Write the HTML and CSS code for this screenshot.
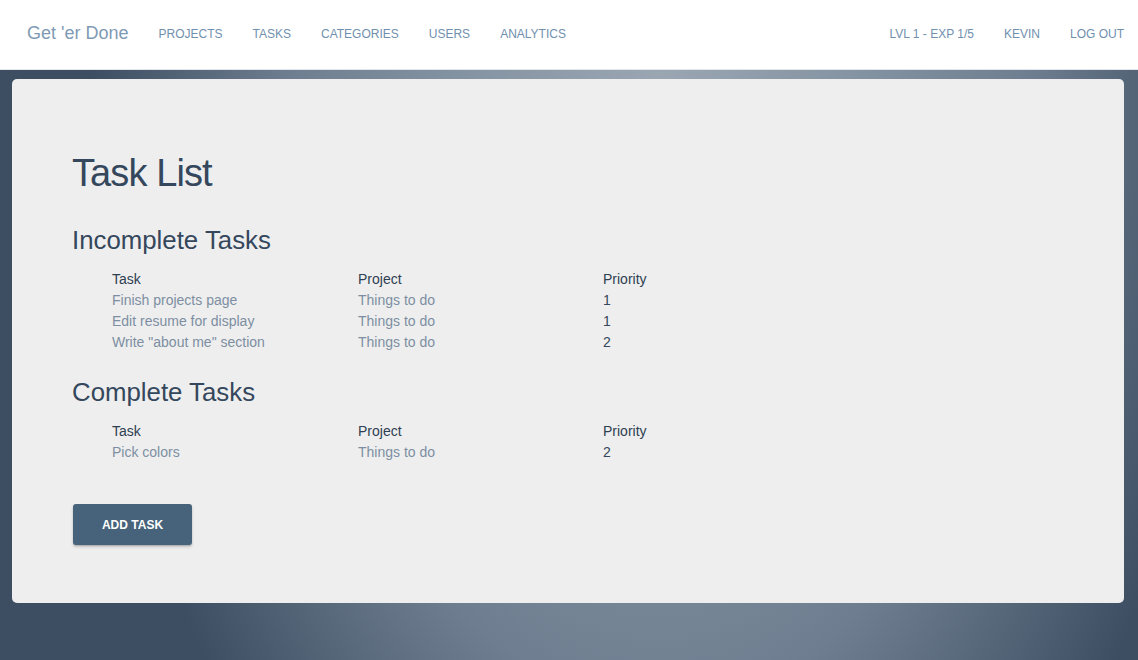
FILE: index.html
```html
<!DOCTYPE html>
<html lang="en">
<head>
<meta charset="utf-8">
<title>Get 'er Done - Task List</title>
<link rel="stylesheet" href="styles.css">
</head>
<body>
<nav class="navbar">
  <div class="nav-left">
    <a class="brand" href="#">Get 'er Done</a>
    <a class="nav-link" href="#">PROJECTS</a>
    <a class="nav-link" href="#">TASKS</a>
    <a class="nav-link" href="#">CATEGORIES</a>
    <a class="nav-link" href="#">USERS</a>
    <a class="nav-link" href="#">ANALYTICS</a>
  </div>
  <div class="nav-right">
    <a class="nav-link" href="#">LVL 1 - EXP 1/5</a>
    <a class="nav-link" href="#">KEVIN</a>
    <a class="nav-link" href="#">LOG OUT</a>
  </div>
</nav>
<main class="page">
  <section class="card">
    <h1 class="title">Task List</h1>
    <h2 class="section-title">Incomplete Tasks</h2>
    <div class="task-table">
      <div class="row head"><span>Task</span><span>Project</span><span>Priority</span></div>
      <div class="row"><a href="#">Finish projects page</a><a href="#">Things to do</a><span>1</span></div>
      <div class="row"><a href="#">Edit resume for display</a><a href="#">Things to do</a><span>1</span></div>
      <div class="row"><a href="#">Write "about me" section</a><a href="#">Things to do</a><span>2</span></div>
    </div>
    <h2 class="section-title">Complete Tasks</h2>
    <div class="task-table">
      <div class="row head"><span>Task</span><span>Project</span><span>Priority</span></div>
      <div class="row"><a href="#">Pick colors</a><a href="#">Things to do</a><span>2</span></div>
    </div>
    <button class="btn" type="button">ADD TASK</button>
  </section>
</main>
</body>
</html>
```
FILE: styles.css
```css
* { box-sizing: border-box; }
html, body { height: 100%; }
body {
  margin: 0;
  font-family: "Liberation Sans", Arial, sans-serif;
  color: #34475c;
  background-color: #4a5a6e;
  background-image: radial-gradient(ellipse 50% 150% at 58% 10%, #9aa6b2 0%, #8493a2 35%, #6e7e90 65%, #3e4e62 100%);
  display: flex;
  flex-direction: column;
}
a { text-decoration: none; }

.navbar {
  height: 70px;
  flex: none;
  background: #fff;
  border-bottom: 1px solid #e2e5e9;
  display: flex;
  align-items: center;
  justify-content: space-between;
  padding: 0 0 2px 27px;
}
.nav-left, .nav-right { display: flex; align-items: center; }
.brand {
  font-size: 18px;
  color: #7f9ab4;
  margin-right: 15px;
}
.nav-link {
  font-size: 12px;
  color: #7190ae;
  padding: 0 15px;
  line-height: 20px;
}
.nav-right .nav-link:last-child { padding-right: 14px; }

.page {
  flex: 1;
  padding: 9px 14px 57px 12px;
}
.card {
  background: #eeeeee;
  border-radius: 5px;
  padding: 70px 60px 58px 60px;
  height: 524px;
}
.title {
  margin: 0;
  font-size: 38px;
  font-weight: normal;
  letter-spacing: -0.9px;
  color: #34475c;
  line-height: 48px;
}
.section-title {
  margin: 0;
  font-size: 25.8px;
  font-weight: normal;
  color: #34475c;
  line-height: 32px;
}
.title + .section-title { margin-top: 27px; }
.task-table {
  margin: 13px 0 0 40px;
  display: flex;
  flex-direction: column;
}
.task-table + .section-title { margin-top: 23px; }
.row {
  display: grid;
  grid-template-columns: 246px 245px 1fr;
  font-size: 14px;
  line-height: 21px;
}
.row.head span { color: #2e3f52; }
.row a { color: #7d8ea2; }
.row span { color: #34475c; }

.btn {
  margin-top: 41px;
  margin-left: 1px;
  width: 119px;
  height: 41px;
  border: none;
  border-radius: 3px;
  background: #46637b;
  color: #fff;
  font-family: "Liberation Sans", Arial, sans-serif;
  font-weight: bold;
  font-size: 12px;
  box-shadow: 0 2px 3px rgba(0,0,0,0.18), 0 1px 1px rgba(0,0,0,0.12);
  cursor: pointer;
}
```
